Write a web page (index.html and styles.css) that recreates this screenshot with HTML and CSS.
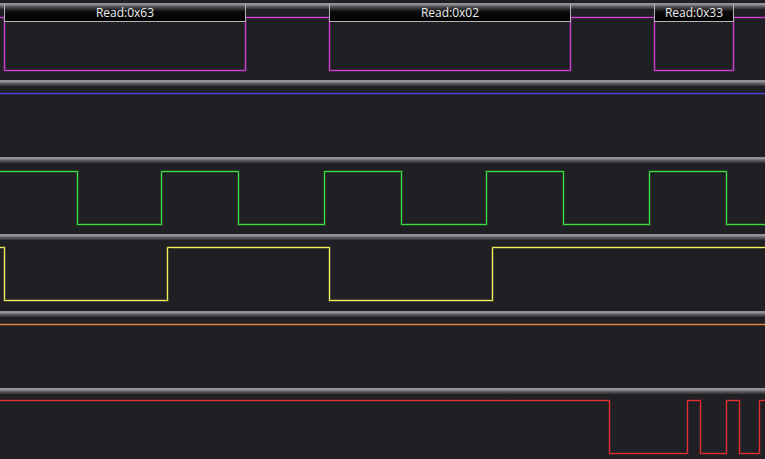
FILE: index.html
```html
<!DOCTYPE html>
<html>
<head>
<meta charset="utf-8">
<link rel="stylesheet" href="styles.css">
</head>
<body>
<div class="scope">
  <div class="lane">
    <div class="sep"></div>
    <svg class="wave magenta" viewBox="0 0 765 71" width="765" height="71">
      <path class="glow" d="M0 8.5 H4.5 V61.5 H245.5 V8.5 H329.5 V61.5 H570.5 V8.5 H654.5 V61.5 H733.5 V8.5 H765"/>
      <path class="sig" d="M0 8.5 H4.5 V61.5 H245.5 V8.5 H329.5 V61.5 H570.5 V8.5 H654.5 V61.5 H733.5 V8.5 H765"/>
    </svg>
    <div class="tag" style="left:4px;width:240px">Read:0x63</div>
    <div class="tag" style="left:329px;width:240px">Read:0x02</div>
    <div class="tag" style="left:654px;width:78px">Read:0x33</div>
  </div>
  <div class="lane">
    <div class="sep"></div>
    <svg class="wave blue" viewBox="0 0 765 71" width="765" height="71">
      <path class="glow" d="M0 7.5 H765"/>
      <path class="sig" d="M0 7.5 H765"/>
    </svg>
  </div>
  <div class="lane">
    <div class="sep"></div>
    <svg class="wave green" viewBox="0 0 765 71" width="765" height="71">
      <path class="glow" d="M0 8.5 H77.5 V61.5 H161.5 V8.5 H238.5 V61.5 H324.5 V8.5 H401.5 V61.5 H486.5 V8.5 H563.5 V61.5 H649.5 V8.5 H726.5 V61.5 H765"/>
      <path class="sig" d="M0 8.5 H77.5 V61.5 H161.5 V8.5 H238.5 V61.5 H324.5 V8.5 H401.5 V61.5 H486.5 V8.5 H563.5 V61.5 H649.5 V8.5 H726.5 V61.5 H765"/>
    </svg>
  </div>
  <div class="lane">
    <div class="sep"></div>
    <svg class="wave yellow" viewBox="0 0 765 71" width="765" height="71">
      <path class="glow" d="M0 7.5 H4.5 V60.5 H167.5 V7.5 H329.5 V60.5 H492.5 V7.5 H765"/>
      <path class="sig" d="M0 7.5 H4.5 V60.5 H167.5 V7.5 H329.5 V60.5 H492.5 V7.5 H765"/>
    </svg>
  </div>
  <div class="lane">
    <div class="sep"></div>
    <svg class="wave orange" viewBox="0 0 765 71" width="765" height="71">
      <path class="glow" d="M0 7.5 H765"/>
      <path class="sig" d="M0 7.5 H765"/>
    </svg>
  </div>
  <div class="lane">
    <div class="sep"></div>
    <svg class="wave red" viewBox="0 0 765 71" width="765" height="71">
      <path class="glow" d="M0 6.5 H609.5 V59.5 H687.5 V6.5 H700.5 V59.5 H726.5 V6.5 H739.5 V59.5 H759.5 V6.5 H765"/>
      <path class="sig" d="M0 6.5 H609.5 V59.5 H687.5 V6.5 H700.5 V59.5 H726.5 V6.5 H739.5 V59.5 H759.5 V6.5 H765"/>
    </svg>
  </div>
</div>
</body>
</html>
```
FILE: styles.css
```css
html, body {
  margin: 0;
  padding: 0;
  background: #201f23;
  width: 765px;
  height: 459px;
  overflow: hidden;
}
.scope {
  display: flex;
  flex-direction: column;
  padding-top: 3px;
}
.lane {
  position: relative;
  height: 77px;
  display: flex;
  flex-direction: column;
  flex: none;
}
.sep {
  height: 6px;
  flex: none;
  background: linear-gradient(#8a8a8c 0, #9c9c9e 20%, #7c7c7e 40%, #5c5c5e 60%, #444446 80%, #343437 100%);
}
.wave {
  display: block;
  flex: none;
}
.sig {
  fill: none;
  stroke: currentColor;
  stroke-width: 1;
}
.glow {
  fill: none;
  stroke: currentColor;
  stroke-width: 3;
  stroke-opacity: 0.2;
}
.magenta { color: #d040d8; }
.blue { color: #4c44e0; }
.green { color: #3ce03c; }
.yellow { color: #f0f060; }
.orange { color: #e88a44; }
.red { color: #e03030; }
.tag {
  position: absolute;
  top: 1px;
  height: 17px;
  border: 1px solid #b4b4b6;
  border-top: none;
  background: linear-gradient(#9a9a9c 0, #4a4a4c 18%, #0c0c0e 45%, #000 100%);
  color: #ececec;
  font-family: "Open Sans", "Noto Sans", sans-serif;
  font-size: 12px;
  line-height: 17px;
  text-align: center;
  white-space: nowrap;
}
```
